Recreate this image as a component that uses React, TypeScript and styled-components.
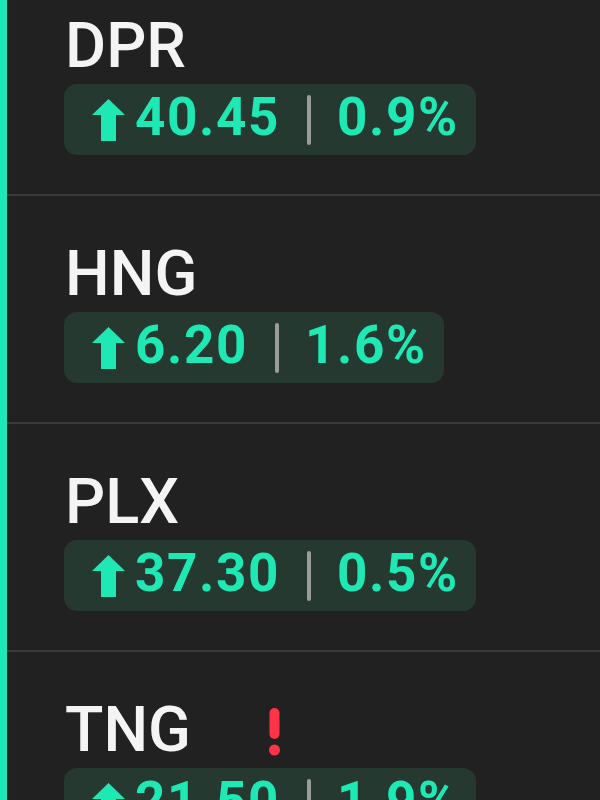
import styled, { createGlobalStyle } from "styled-components";

const GlobalStyle = createGlobalStyle`
  *, *::before, *::after {
    box-sizing: border-box;
  }
  html, body {
    margin: 0;
    padding: 0;
    background: #212121;
    overflow: hidden;
  }
  body {
    font-family: Roboto, "Noto Sans", sans-serif;
  }
`;

interface Quote {
  symbol: string;
  change: string;
  percent: string;
  alert?: boolean;
}

const quotes: Quote[] = [
  { symbol: "DPR", change: "40.45", percent: "0.9%" },
  { symbol: "HNG", change: "6.20", percent: "1.6%" },
  { symbol: "PLX", change: "37.30", percent: "0.5%" },
  { symbol: "TNG", change: "21.50", percent: "1.9%", alert: true },
];

const UpArrow = () => (
  <ArrowSvg viewBox="0 0 33 42" aria-hidden>
    <polygon points="16.5,0 33,16 24,16 24,42 9,42 9,16 0,16" fill="currentColor" />
  </ArrowSvg>
);

const AlertMark = () => (
  <AlertSvg viewBox="0 0 13 48" aria-hidden>
    <rect x="1.5" y="0" width="10" height="31" rx="5" fill="currentColor" />
    <circle cx="6.5" cy="42" r="5.5" fill="currentColor" />
  </AlertSvg>
);

const App = () => {
  return (
    <Screen>
      <GlobalStyle />
      <List>
        {quotes.map((q) => (
          <Row key={q.symbol}>
            <TitleRow>
              <Symbol>{q.symbol}</Symbol>
              {q.alert && <AlertMark />}
            </TitleRow>
            <Pill>
              <UpArrow />
              <Value>{q.change}</Value>
              <Divider />
              <Value>{q.percent}</Value>
            </Pill>
          </Row>
        ))}
      </List>
    </Screen>
  );
};

export default App;

/* whole screen */
const Screen = styled.div`
  width: 600px;
  height: 800px;
  overflow: hidden;
  background: #212121;
`;

/* list, scrolled a bit up */
const List = styled.div`
  display: flex;
  flex-direction: column;
  margin-top: -32px;
  border-left: 7px solid #1de9b6;
  min-height: 900px;
`;

const Row = styled.div`
  display: flex;
  flex-direction: column;
  align-items: flex-start;
  gap: 2px;
  height: 228px;
  padding: 42px 0 0 57px;
  border-bottom: 2px solid #3a3a3a;
  flex-shrink: 0;
`;

const TitleRow = styled.div`
  display: flex;
  align-items: center;
  height: 72px;
`;

const Symbol = styled.span`
  font-size: 63px;
  line-height: 72px;
  font-weight: 500;
  color: #f4f4f4;
  padding-left: 1px;
`;

const AlertSvg = styled.svg`
  width: 13px;
  height: 48px;
  margin-left: 77px;
  margin-top: 4px;
  color: #ff3347;
`;

/* change pill */
const Pill = styled.div`
  display: flex;
  align-items: center;
  height: 71px;
  padding: 0 17px 0 28px;
  border-radius: 13px;
  background: #263930;
  color: #1ee9b4;
`;

const ArrowSvg = styled.svg`
  width: 33px;
  height: 42px;
  margin-right: 10px;
  flex-shrink: 0;
`;

const Value = styled.span`
  font-size: 53px;
  font-weight: 700;
  line-height: 67px;
  margin-bottom: 4px;
  letter-spacing: 1.6px;
`;

const Divider = styled.div`
  width: 4px;
  height: 50px;
  margin: 0 26px 0 27px;
  border-radius: 2px;
  background: #9c9c9c;
`;
